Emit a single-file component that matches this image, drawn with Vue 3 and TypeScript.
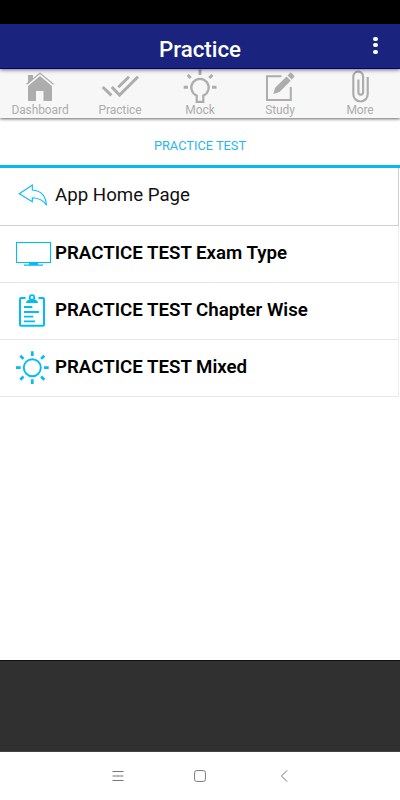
<script setup lang="ts">
interface NavItem {
  id: string
  label: string
}

interface MenuRow {
  id: string
  label: string
  strong: boolean
}

const navItems: NavItem[] = [
  { id: 'home', label: 'Dashboard' },
  { id: 'checks', label: 'Practice' },
  { id: 'bulb', label: 'Mock' },
  { id: 'edit', label: 'Study' },
  { id: 'clip', label: 'More' },
]

const rows: MenuRow[] = [
  { id: 'back', label: 'App Home Page', strong: false },
  { id: 'monitor', label: 'PRACTICE TEST Exam Type', strong: true },
  { id: 'clipboard', label: 'PRACTICE TEST Chapter Wise', strong: true },
  { id: 'sun', label: 'PRACTICE TEST Mixed', strong: true },
]
</script>

<template>
  <div class="screen">
    <div class="status"></div>
    <header class="bar">
      <h1 class="title">Practice</h1>
      <button class="more" aria-label="Options"><i></i><i></i><i></i></button>
    </header>

    <nav class="nav">
      <a v-for="item in navItems" :key="item.id" class="nav-item">
        <svg class="nav-icon" viewBox="0 0 80 35" width="80" height="35">
          <g v-if="item.id === 'home'">
            <path class="solid" d="M28 6h5v4.500l-5 4.500zM40 6.900l12 10V32h-8.500V22h-7.500v10h-8V16.900z" />
            <path class="line" stroke-width="1.200" d="M26.500 15.200L40 4.300l13.500 10.900" />
          </g>
          <g v-else-if="item.id === 'checks'" class="line" stroke-width="3">
            <path d="M22.700 18l8.700 8.300M31.800 18l7.700 8L58 7.800M38.300 18.300L49 7.800" />
          </g>
          <g v-else-if="item.id === 'bulb'" class="line">
            <path stroke-width="2.200" d="M36.700 32.800v-6.200a8.700 8.700 0 1 1 6.600 0v6.200z" />
            <path stroke-width="3" d="M40 0.500v5.500M23.700 18.300H28M52 18.300h4.500M27.700 6l3 3M52.300 6l-3 3" />
          </g>
          <g v-else-if="item.id === 'edit'">
            <path class="line" stroke-width="2" d="M41.500 7.200H27V31h23.800V18" />
            <path class="solid" d="M33.300 25l1.800-6.200L46.500 7.400l4.300 4.300L39.500 23zM47.500 6.400l2.500-2.500q.7-.6 1.400 0l2.700 2.700q.7.7 0 1.400l-2.400 2.500z" />
          </g>
          <g v-else class="line" stroke-width="2.200">
            <path d="M47.700 8v17.300a7.200 7.200 0 0 1-14.400 0V7.500a4.900 4.900 0 0 1 9.800 0v15.800a2.350 2.350 0 0 1-4.700 0V10.500" />
          </g>
        </svg>
        <span class="nav-label">{{ item.label }}</span>
      </a>
    </nav>

    <div class="tab">PRACTICE TEST</div>

    <main class="list">
      <div v-for="row in rows" :key="row.id" class="row" :class="{ strong: row.strong }">
        <svg class="row-icon" viewBox="0 0 55 56" width="55" height="56">
          <path
            v-if="row.id === 'back'"
            stroke-width="1.100"
            d="M19.300 25.700L32.300 17v5c9 .8 13.700 6.500 14.100 15.300-2.800-5-7.200-7.300-14.100-7.600v4.100z"
          />
          <g v-else-if="row.id === 'monitor'">
            <rect x="16.500" y="16.500" width="34" height="20" stroke-width="1.100" />
            <path class="fill" d="M29 37h9v1.500h5v1.200H24v-1.200h5z" />
          </g>
          <g v-else-if="row.id === 'clipboard'">
            <path stroke-width="2" d="M25.500 15H21q-1 0-1 1v25.700q0 1 1 1h22q1 0 1-1V16q0-1-1-1h-4.500" />
            <path class="fill" d="M26 20q0-3 4-3.500h4q4 .5 4 3.500z" />
            <circle cx="32" cy="14.500" r="2.300" stroke-width="1.800" />
            <path stroke-width="1.800" d="M24 24h8.300M24 29h15M24 33.700h9.300M24 38.300h11" />
          </g>
          <g v-else>
            <circle cx="32.300" cy="27.700" r="8.500" stroke-width="1.900" />
            <path
              stroke-width="2.700"
              d="M32.300 11.300V16M32.300 39.300V44M16 27.700h4.700M44 27.700h4.700M20.300 15.700l3.200 3.200M44.300 15.700l-3.200 3.200M20.300 39.700l3.200-3.200M44.300 39.700l-3.200-3.200"
            />
          </g>
        </svg>
        <span class="row-label">{{ row.label }}</span>
      </div>
    </main>

    <div class="ad"></div>

    <footer class="system">
      <svg viewBox="0 0 12 12" width="12" height="12"><path d="M.5 1.500h11M.5 6h11M.5 10.500h11" /></svg>
      <svg viewBox="0 0 12 12" width="12" height="12"><rect x=".6" y=".6" width="10.800" height="10.800" rx="2" /></svg>
      <svg viewBox="0 0 12 12" width="12" height="12"><path d="M11.200.3L5.500 6l5.700 5.700" /></svg>
    </footer>
  </div>
</template>

<style>
body {
  margin: 0;
  background: #fff;
}
</style>

<style scoped>
.screen {
  display: flex;
  flex-direction: column;
  width: 400px;
  height: 800px;
  overflow: hidden;
  background: #fff;
  font-family: Roboto, "Liberation Sans", sans-serif;
}

.status {
  height: 24px;
  flex: none;
  background: #000;
}

.bar {
  position: relative;
  z-index: 2;
  display: grid;
  grid-template-columns: 48px 1fr 48px;
  box-sizing: border-box;
  height: 45px;
  flex: none;
  background: #1a237e;
  border-bottom: 1px solid #000080;
  box-shadow: 0 1px 4px rgba(0, 0, 0, 0.55);
}

.title {
  grid-column: 2;
  margin: 0;
  padding-top: 3px;
  color: #fff;
  font-size: 22.300px;
  font-weight: 500;
  line-height: 44px;
  text-align: center;
}

.more {
  display: flex;
  flex-direction: column;
  align-items: center;
  gap: 2.200px;
  padding: 12.500px 1px 0 0;
  border: 0;
  background: none;
}

.more i {
  width: 4.400px;
  height: 4.400px;
  border-radius: 50%;
  background: #fff;
}

.nav {
  position: relative;
  z-index: 1;
  display: grid;
  grid-template-columns: repeat(5, 1fr);
  height: 49px;
  flex: none;
  background: #f7f7f7;
  box-shadow: 0 1px 3px rgba(0, 0, 0, 0.6);
}

.nav-item {
  display: flex;
  flex-direction: column;
  align-items: center;
}

.nav-icon {
  display: block;
}

.line {
  fill: none;
  stroke: #adadad;
}

.solid {
  fill: #adadad;
}

.nav-label {
  color: #adadad;
  font-size: 12px;
  line-height: 13px;
  letter-spacing: -0.100px;
}

.tab {
  box-sizing: border-box;
  height: 50px;
  flex: none;
  padding-top: 4px;
  border-bottom: 3px solid #03bcf4;
  color: #29b6ea;
  font-size: 12.800px;
  line-height: 48px;
  text-align: center;
}

.list {
  flex: 1;
}

.row {
  display: flex;
  box-sizing: border-box;
  width: 399px;
  height: 57px;
  border-right: 1px solid #ededed;
  border-bottom: 1px solid #e6e6e6;
}

.row:first-child {
  height: 58px;
  border-color: #d0d0d0;
}

.row-icon {
  flex: none;
  fill: none;
  stroke: #03bcf4;
}

.fill {
  fill: #03bcf4;
  stroke: none;
}

.row-label {
  color: #111;
  font-size: 18.700px;
  line-height: 54px;
  white-space: nowrap;
}

.strong .row-label {
  color: #000;
  font-weight: 600;
}

.ad {
  box-sizing: border-box;
  height: 92px;
  flex: none;
  background: #303030;
  border-top: 1px solid #111;
  border-bottom: 1px solid #454545;
}

.system {
  display: flex;
  justify-content: center;
  gap: 70px;
  box-sizing: border-box;
  height: 48px;
  flex: none;
  padding-top: 18px;
  background: #fff;
}

.system svg {
  fill: none;
  stroke: #777;
  stroke-width: 1;
}
</style>
